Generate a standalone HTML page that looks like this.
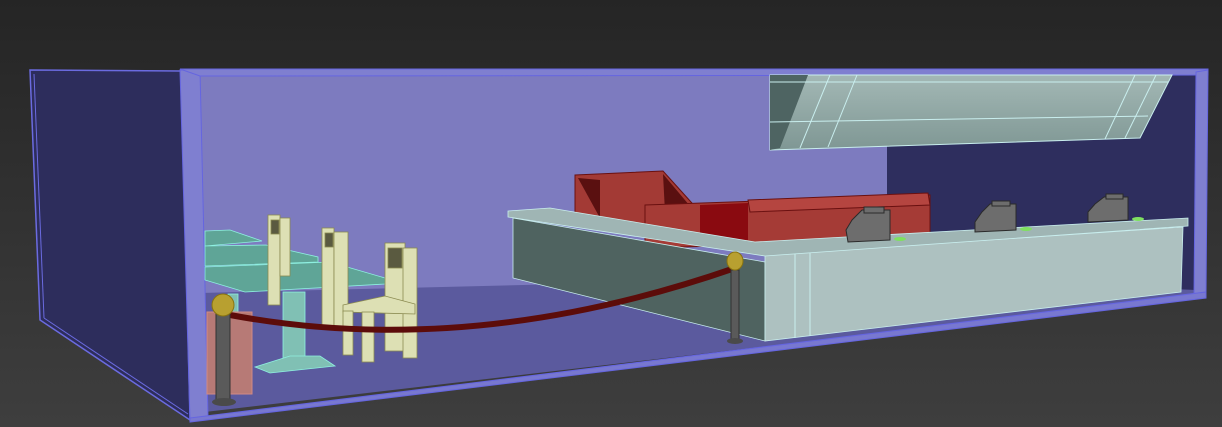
<!DOCTYPE html>
<html><head><style>html,body{margin:0;padding:0;background:#2e2e2e}svg{display:block}</style></head><body>
<svg width="1222" height="427" viewBox="0 0 1222 427" xmlns="http://www.w3.org/2000/svg">
<defs>
<linearGradient id="bg" x1="0" y1="0" x2="0" y2="1"><stop offset="0" stop-color="#252525"/><stop offset="1" stop-color="#3e3e3e"/></linearGradient>
<linearGradient id="sg" x1="0" y1="0" x2="0" y2="1"><stop offset="0" stop-color="#a3b8b5"/><stop offset="1" stop-color="#7f9794"/></linearGradient>
</defs>
<rect width="1222" height="427" fill="url(#bg)"/>
<polygon points="200,75 887,75 887,280 200,296" fill="#7d7bbf"/>
<polygon points="887,75 1196,75 1196,292 887,290" fill="#2e2e5e"/>
<polygon points="200,293 887,276 1196,290 1196,296 205,412" fill="#5b5a9e"/>
<polygon points="30,70 182,71 190,420 40,320" fill="#2d2d5c" stroke="#6b6be0" stroke-width="1.5"/>
<line x1="34" y1="74" x2="44" y2="318" stroke="#6b6be0"/>
<line x1="44" y1="318" x2="188" y2="414" stroke="#6b6be0"/>
<polygon points="180,70 200,70 208,417 190,421" fill="#7f7fd0" stroke="#6565e0"/>
<polygon points="180,69 1208,69 1208,75 200,76" fill="#7f7fd0" stroke="#6565e0"/>
<polygon points="1196,72 1208,70 1206,294 1194,297" fill="#7f7fd0" stroke="#6565e0"/>
<polygon points="190,418 1206,292 1206,298 190,422" fill="#7878d0" stroke="#6565e0"/>
<polygon points="770,75 1172,75 1140,138 770,150" fill="url(#sg)" stroke="#c9eeee" stroke-width="1"/>
<polygon points="770,75 808,75 780,148 770,150" fill="#4e6462"/>
<line x1="770" y1="82" x2="1168" y2="82" stroke="#c9eeee"/>
<line x1="770" y1="122" x2="1148" y2="116" stroke="#c9eeee"/>
<line x1="830" y1="75" x2="800" y2="148" stroke="#c9eeee"/>
<line x1="857" y1="75" x2="828" y2="147" stroke="#c9eeee"/>
<line x1="1135" y1="75" x2="1105" y2="139" stroke="#c9eeee"/>
<line x1="1156" y1="75" x2="1125" y2="138" stroke="#c9eeee"/>
<polygon points="575,175 663,171 700,212 700,232 575,225" fill="#a33a35" stroke="#6a1010"/>
<polygon points="578,178 600,218 600,180" fill="#5a1010"/>
<polygon points="663,174 695,212 665,212" fill="#5a1010"/>
<polygon points="645,205 930,195 930,240 645,248" fill="#a53b36" stroke="#6a1010"/>
<polygon points="700,205 748,203 748,240 700,240" fill="#8a0a10"/>
<polygon points="748,200 928,193 930,205 750,212" fill="#b54540" stroke="#6a1010"/>
<polygon points="513,218 765,262 765,341 513,278" fill="#4f6360" stroke="#c9eeee" stroke-width=".8"/>
<polygon points="765,255 1183,227 1181,292 765,341" fill="#adc1c0" stroke="#c9eeee" stroke-width=".8"/>
<polygon points="508,211 550,208 755,242 1188,218 1188,226 765,256 508,217" fill="#9fb5b4" stroke="#c9eeee" stroke-width=".8"/>
<line x1="795" y1="254" x2="795" y2="338" stroke="#c9eeee"/>
<line x1="810" y1="253" x2="810" y2="336" stroke="#c9eeee"/>
<g fill="#6d6d6d" stroke="#2a2a2a">
<polygon points="852,220 862,210 890,210 890,240 848,242 846,230"/>
<rect x="864" y="207" width="20" height="6"/>
<polygon points="982,212 990,204 1016,204 1016,230 975,232 975,222"/>
<rect x="992" y="201" width="18" height="5"/>
<polygon points="1095,204 1104,197 1128,197 1128,220 1088,222 1088,212"/>
<rect x="1106" y="194" width="17" height="5"/>
</g>
<g fill="#7fe060"><ellipse cx="900" cy="239" rx="6" ry="2"/><ellipse cx="1026" cy="229" rx="6" ry="2"/><ellipse cx="1138" cy="219" rx="6" ry="2"/></g>
<g fill="#5fa597" stroke="#8ef0e0" stroke-width=".8">
<polygon points="205,231 230,230 262,241 205,246"/>
<polygon points="205,246 266,245 318,257 318,262 205,266"/>
<polygon points="205,267 330,262 385,278 385,284 245,292 205,280"/>
<rect x="283" y="292" width="22" height="68" fill="#80c0b4"/>
<polygon points="255,367 290,356 320,356 335,366 270,373" fill="#80c0b4"/>
<rect x="228" y="294" width="10" height="45" fill="#80c0b4"/>
</g>
<g fill="#dde0b4" stroke="#8a8a50" stroke-width=".8">
<rect x="268" y="215" width="12" height="90"/><rect x="280" y="218" width="10" height="58"/><rect x="271" y="220" width="8" height="14" fill="#5a5a40"/>
<rect x="322" y="228" width="12" height="100"/><rect x="334" y="232" width="14" height="95"/><rect x="325" y="233" width="8" height="14" fill="#5a5a40"/>
<rect x="385" y="243" width="20" height="108"/><rect x="403" y="248" width="14" height="110"/><rect x="388" y="248" width="14" height="20" fill="#5a5a40"/>
<polygon points="343,305 385,296 415,304 415,314 343,312"/><rect x="343" y="311" width="10" height="44"/><rect x="362" y="312" width="12" height="50"/>
</g>
<rect x="207" y="312" width="45" height="82" fill="#b77a76" stroke="#d08a85"/>
<path d="M230,315 Q470,360 735,268" fill="none" stroke="#5c0c0a" stroke-width="6"/>
<rect x="216" y="312" width="14" height="90" fill="#5a5a5a" stroke="#333"/>
<ellipse cx="224" cy="402" rx="12" ry="4" fill="#4a4a4a"/>
<circle cx="223" cy="305" r="11" fill="#b8a030" stroke="#8a7410"/>
<rect x="731" y="270" width="8" height="70" fill="#5a5a5a" stroke="#333"/>
<ellipse cx="735" cy="341" rx="8" ry="3" fill="#4a4a4a"/>
<ellipse cx="735" cy="261" rx="8" ry="9" fill="#b8a030" stroke="#8a7410"/>
</svg>
</body></html>
